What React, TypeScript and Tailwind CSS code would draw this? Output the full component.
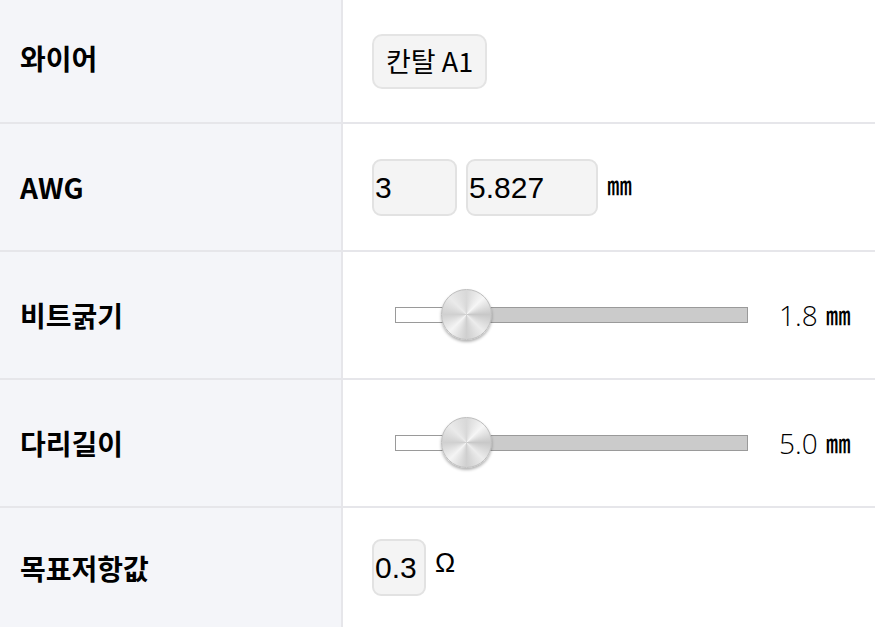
import React from "react";

const label = "font-['Noto_Sans_CJK_KR','Noto_Sans',sans-serif] font-bold text-[28px] text-black";
const val = "font-['Liberation_Sans','Noto_Sans_CJK_KR',sans-serif] text-[30px] text-black";
const mm = "font-['Noto_Sans_CJK_KR',sans-serif] font-medium text-[25px] text-black";

const Row = ({ title, first, last, children }: { title: string; first?: boolean; last?: boolean; children: React.ReactNode }) => (
  <div
    className={`flex ${first ? "h-[124px]" : last ? "h-[119px]" : "h-[128px]"} ${last ? "" : "border-b-2 border-[#e6e6ea]"}`}
  >
    <div className={`w-[343px] shrink-0 bg-[#f4f5f9] border-r-2 border-[#e6e6ea] flex items-center pl-[20px] ${first ? "pb-[6px]" : ""}`}>
      <span className={label}>{title}</span>
    </div>
    <div className="flex-1 flex items-center bg-white pl-[29px]">{children}</div>
  </div>
);

const Slider = ({ value }: { value: string }) => (
  <div className="flex items-center">
    <div className="ml-[23px] relative w-[353px] h-[16px] flex border border-[#9a9a9a]">
      <div className="w-[70px] bg-white" />
      <div className="flex-1 bg-[#cbcbcb]" />
      <div className="absolute left-[45px] top-[-19px] w-[51px] h-[51px] rounded-full border border-[#bdbdbd] bg-[conic-gradient(#d8d8d8,#f6f6f6,#c8c8c8,#ececec,#cfcfcf,#f4f4f4,#d0d0d0,#eaeaea,#d8d8d8)] shadow-[0_2px_3px_rgba(0,0,0,0.3)]" />
    </div>
    <span className="ml-[31px] flex items-center text-black">
      <span className="font-['Open_Sans',sans-serif] font-light text-[28px]">{value}</span>
      <span className={`${mm} ml-[8px]`}>㎜</span>
    </span>
  </div>
);

export default function App() {
  return (
    <div className="w-[875px] h-[627px] overflow-hidden bg-white">
      <Row title="와이어" first>
        <div className="h-[55px] px-[12px] flex items-center rounded-[10px] border-2 border-[#e4e4e4] bg-[#f4f4f4]">
          <span className="font-['Noto_Sans_CJK_KR',sans-serif] text-[27px] text-black">칸탈 A1</span>
        </div>
      </Row>
      <Row title="AWG">
        <div className="flex items-center">
          <div className={`w-[85px] h-[57px] rounded-[9px] border-2 border-[#e2e2e2] bg-[#f4f4f4] flex items-center pl-[1px] ${val}`}>3</div>
          <div className={`ml-[9px] w-[132px] h-[57px] rounded-[9px] border-2 border-[#e2e2e2] bg-[#f4f4f4] flex items-center pl-[1px] ${val}`}>5.827</div>
          <span className={`${mm} ml-[9px] mb-[4px]`}>㎜</span>
        </div>
      </Row>
      <Row title="비트굵기">
        <Slider value="1.8" />
      </Row>
      <Row title="다리길이">
        <Slider value="5.0" />
      </Row>
      <Row title="목표저항값" last>
        <div className="flex items-center">
          <div className={`w-[54px] h-[57px] rounded-[9px] border-2 border-[#e2e2e2] bg-[#f4f4f4] flex items-center pl-[1px] whitespace-nowrap ${val}`}>0.3</div>
          <span className="ml-[9px] mb-[8px] text-[27px] font-['Liberation_Sans',sans-serif] text-black">Ω</span>
        </div>
      </Row>
    </div>
  );
}
